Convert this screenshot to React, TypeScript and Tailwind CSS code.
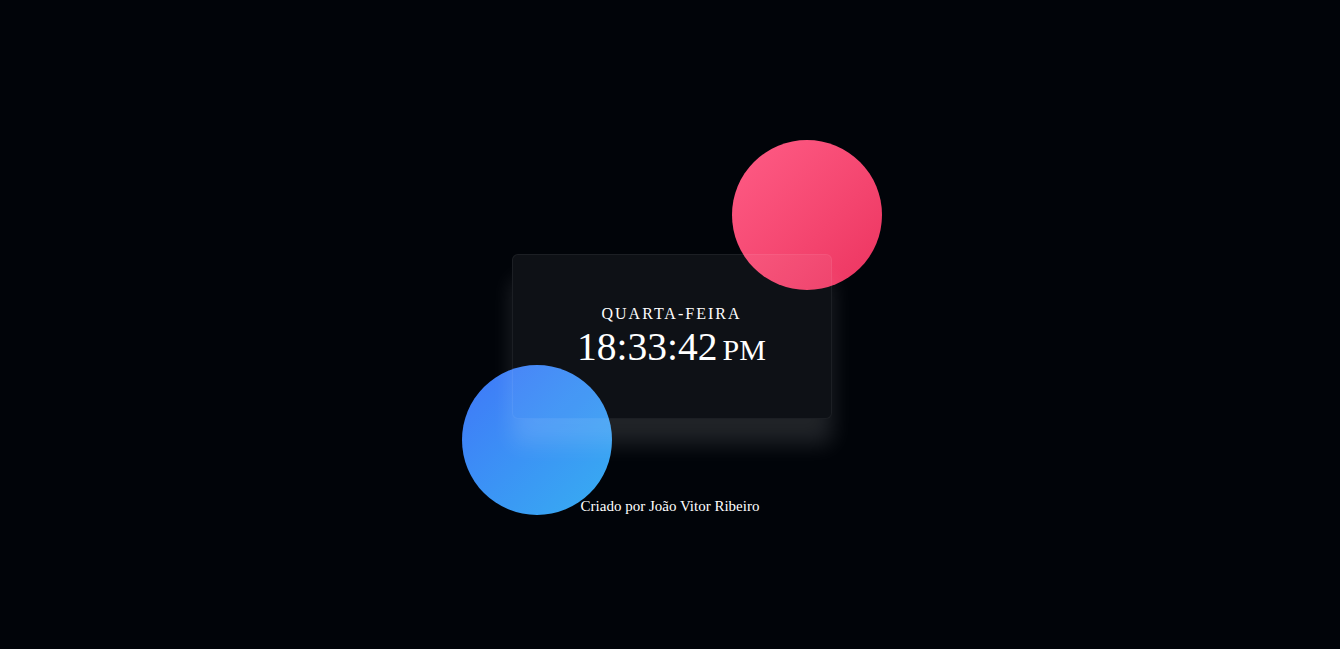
import React from 'react';

export default function App() {
  return (
    <div className="min-h-screen w-full bg-[#010409] flex flex-col items-center pt-[254px] font-['Liberation_Serif',_serif] text-white">
      {/* Clock card with decorative circles */}
      <div className="relative ml-[3px] w-[320px] h-[165px]">
        <div className="absolute left-[220px] top-[-114px] w-[150px] h-[150px] rounded-full bg-gradient-to-br from-[#ff5c86] to-[#ec325f]" />
        <div className="absolute left-[-50px] top-[111px] w-[150px] h-[150px] rounded-full bg-gradient-to-br from-[#4076f8] to-[#37aef1]" />
        <div className="relative z-10 w-full h-full rounded-md border border-white/[0.06] bg-white/[0.055] shadow-[0_25px_22px_rgba(255,255,255,0.13)] flex flex-col items-center justify-center">
          <div className="text-[16px] leading-none tracking-[2px] uppercase">Quarta-feira</div>
          <div className="mt-[6px] flex items-baseline leading-none">
            <span className="text-[39.5px]">18:33:42</span>
            <span className="ml-[5px] text-[30px]">PM</span>
          </div>
        </div>
      </div>
      <p className="mt-[80px] text-[15px] leading-none">Criado por João Vitor Ribeiro</p>
    </div>
  );
}
